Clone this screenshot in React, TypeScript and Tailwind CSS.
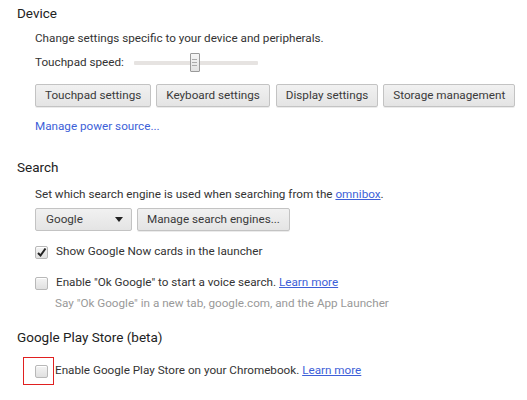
import React from "react";

const Btn = ({ children, className = "" }: { children: React.ReactNode; className?: string }) => (
  <button
    className={
      "h-[23px] px-[9px] rounded-[2px] border border-[#c3c3c3] bg-gradient-to-b from-[#f1f1f1] to-[#e4e4e4] text-[11.7px] text-[#3a3a3a] shadow-[0_1px_0_rgba(0,0,0,0.08)] leading-none whitespace-nowrap " +
      className
    }
  >
    {children}
  </button>
);

const Check = ({ checked = false }: { checked?: boolean }) => (
  <span className="relative inline-block shrink-0 w-[13px] h-[13px] rounded-[2px] border border-[#b8b8b8] bg-gradient-to-b from-[#f4f4f4] to-[#e0e0e0] shadow-[inset_0_1px_0_#fff]">
    {checked && (
      <svg viewBox="0 0 13 13" className="absolute -left-[1px] -top-[1px] w-[13px] h-[13px]">
        <path d="M3 7 L5.5 9.5 L10.5 2.5" fill="none" stroke="#222" strokeWidth="2" />
      </svg>
    )}
  </span>
);

export default function App() {
  return (
    <div
      className="w-[527px] h-[400px] bg-white text-[#333] overflow-hidden"
      style={{ fontFamily: "Roboto, 'Noto Sans', sans-serif" }}
    >
      <div className="pl-[17px] pt-[3px]">
        <h2 className="text-[13.5px] text-[#222] h-[20px] leading-[20px]">Device</h2>
        <div className="pl-[18px]">
          <div className="mt-[6px] text-[11.7px] leading-[18px]">Change settings specific to your device and peripherals.</div>
          <div className="mt-[6px] flex items-center h-[20px] text-[11.7px]">
            <span>Touchpad speed:</span>
            <div className="relative ml-[10px] w-[124px] h-[20px] flex items-center">
              <div className="w-full h-[4px] bg-[#e6e3e1] rounded-[1px]" />
              <div className="absolute left-[56px] top-[0px] w-[10px] h-[19px] border border-[#9a9a9a] rounded-[1px] bg-gradient-to-b from-[#f6f6f6] to-[#e2e2e2] flex flex-col items-center justify-center gap-[2px]">
                <div className="w-[5px] h-[1px] bg-[#aaa]" />
                <div className="w-[5px] h-[1px] bg-[#aaa]" />
                <div className="w-[5px] h-[1px] bg-[#aaa]" />
              </div>
            </div>
          </div>
          <div className="mt-[11px] flex">
            <Btn>Touchpad settings</Btn>
            <Btn className="ml-[5px]">Keyboard settings</Btn>
            <Btn className="ml-[6px]">Display settings</Btn>
            <Btn className="ml-[5px]">Storage management</Btn>
          </div>
          <div className="mt-[10px] text-[11.7px] leading-[18px] text-[#3d5fd8]">Manage power source...</div>
        </div>

        <h2 className="mt-[22px] text-[13.5px] text-[#222] h-[20px] leading-[20px]">Search</h2>
        <div className="pl-[18px]">
          <div className="mt-[8px] text-[11.7px] leading-[18px]">
            Set which search engine is used when searching from the{" "}
            <span className="text-[#3d5fd8] underline">omnibox</span>.
          </div>
          <div className="mt-[5px] flex gap-[5px]">
            <div className="w-[97px] h-[23px] pl-[10px] pr-[8px] rounded-[2px] border border-[#c3c3c3] bg-gradient-to-b from-[#f1f1f1] to-[#e4e4e4] text-[11.7px] text-[#3a3a3a] flex items-center justify-between">
              <span>Google</span>
              <svg viewBox="0 0 8 5" className="w-[8px] h-[5px]"><path d="M0 0 H8 L4 5 Z" fill="#222" /></svg>
            </div>
            <Btn>Manage search engines...</Btn>
          </div>
          <div className="mt-[12px] flex items-center gap-[8px] text-[11.7px] h-[18px]">
            <Check checked />
            <span>Show Google Now cards in the launcher</span>
          </div>
          <div className="mt-[13px] flex items-center gap-[8px] text-[11.7px] h-[18px]">
            <Check />
            <span>
              Enable "Ok Google" to start a voice search.{" "}
              <span className="text-[#3d5fd8] underline">Learn more</span>
            </span>
          </div>
          <div className="mt-[2px] pl-[20px] text-[11.7px] leading-[18px] text-[#999]">
            Say "Ok Google" in a new tab, google.com, and the App Launcher
          </div>
        </div>

        <h2 className="mt-[15px] text-[13.5px] text-[#222] h-[20px] leading-[20px]">Google Play Store (beta)</h2>
        <div className="mt-[10px] flex items-center h-[28px]">
          <div className="ml-[6px] w-[31px] h-[28px] border border-[#e02020] flex items-center justify-end pr-[5px]">
            <Check />
          </div>
          <span className="ml-[1px] text-[11.7px]">
            Enable Google Play Store on your Chromebook.{" "}
            <span className="text-[#3d5fd8] underline">Learn more</span>
          </span>
        </div>
      </div>
    </div>
  );
}
